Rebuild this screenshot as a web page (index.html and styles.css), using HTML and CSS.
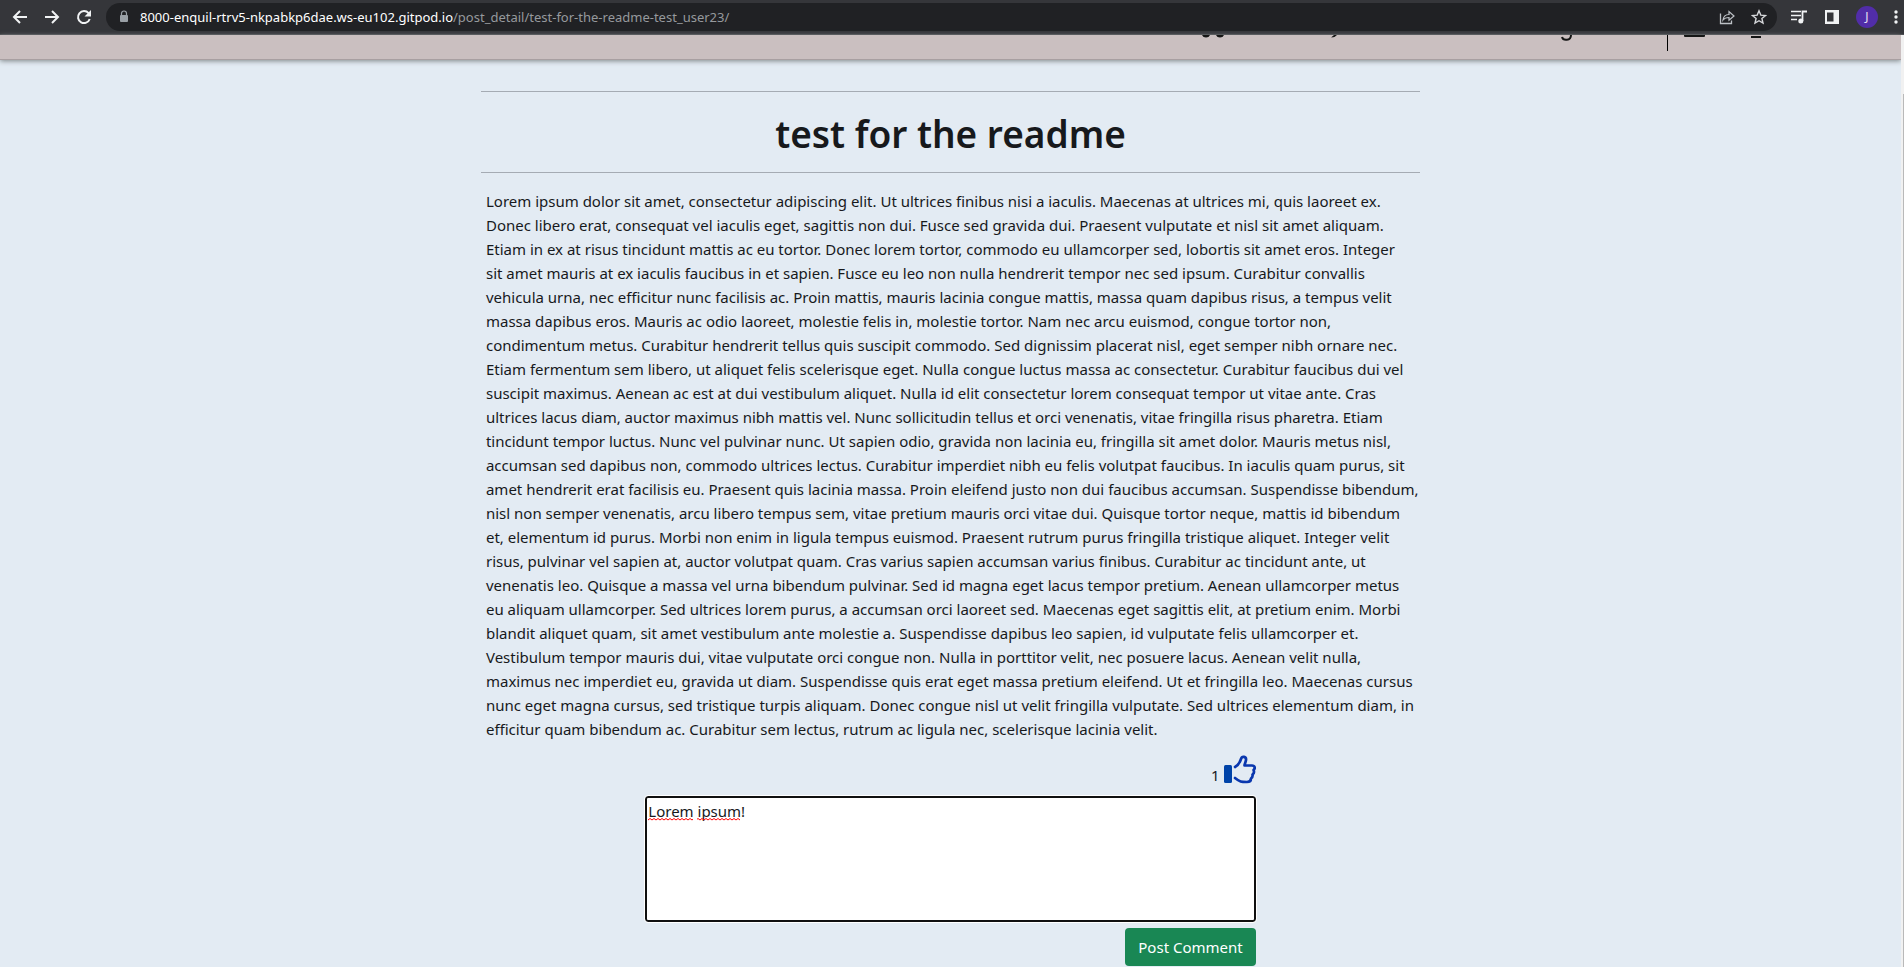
FILE: index.html
```html
<!DOCTYPE html>
<html lang="en">
<head>
<meta charset="utf-8">
<title>test for the readme</title>
<link rel="stylesheet" href="styles.css">
</head>
<body>
<div class="toolbar">
  <button class="tool" aria-label="Back"><svg width="16" height="16" viewBox="0 0 16 16"><path d="M15 8H2M8 2L2 8l6 6" fill="none" stroke="#f1f3f4" stroke-width="2"/></svg></button>
  <button class="tool" aria-label="Forward"><svg width="16" height="16" viewBox="0 0 16 16"><path d="M1 8h13M8 2l6 6-6 6" fill="none" stroke="#f1f3f4" stroke-width="2"/></svg></button>
  <button class="tool" aria-label="Reload"><svg width="16" height="16" viewBox="0 0 16 16"><path d="M13.7 10A6 6 0 1 1 12.6 4.2" fill="none" stroke="#f1f3f4" stroke-width="2"/><path d="M15 1v6.500H8.500z" fill="#f1f3f4"/></svg></button>
  <div class="address">
    <svg width="10" height="14" viewBox="0 0 10 14"><rect x="1" y="5" width="8" height="7" rx="1" fill="#9aa0a6"/><path d="M2.500 5.500V3.500a2.500 2.500 0 0 1 5 0v2" fill="none" stroke="#9aa0a6" stroke-width="1.200"/></svg>
    <span class="url"><b>8000-enquil-rtrv5-nkpabkp6dae.ws-eu102.gitpod.io</b>/post_detail/test-for-the-readme-test_user23/</span>
    <button class="tool" aria-label="Share"><svg width="16" height="16" viewBox="0 0 16 16"><path d="M1.500 4.500v10h11v-3" fill="none" stroke="#bdc1c6" stroke-width="1.300"/><path d="M4 11c.5-4 2.500-5.500 6-5.500V2.500l5 4.500-5 4.200V8.500C7.500 8.500 5.500 9 4 11z" fill="none" stroke="#bdc1c6" stroke-width="1.200"/></svg></button>
    <button class="tool" aria-label="Bookmark"><svg width="16" height="16" viewBox="0 0 16 16"><path d="M8 1.800l1.800 4.300 4.700.4-3.600 3 1.100 4.600L8 11.700l-4 2.400 1.100-4.600-3.600-3 4.700-.4z" fill="none" stroke="#d5d7da" stroke-width="1.400"/></svg></button>
  </div>
  <button class="tool" aria-label="Media"><svg width="18" height="16" viewBox="0 0 18 16"><path d="M1 2.500h10M1 6.500h10M1 10.500h6" stroke="#f1f3f4" stroke-width="1.700"/><circle cx="10.800" cy="12" r="2.500" fill="#f1f3f4"/><path d="M12.500 12V2.500H17" fill="none" stroke="#f1f3f4" stroke-width="1.800"/></svg></button>
  <button class="tool" aria-label="Side panel"><svg width="16" height="16" viewBox="0 0 16 16"><path fill="#f1f3f4" fill-rule="evenodd" d="M1 1h14v14H1zM3 3.500v9h6.500v-9z"/></svg></button>
  <button class="avatar" aria-label="Profile">J</button>
  <button class="tool menu" aria-label="Menu"><svg width="4" height="16" viewBox="0 0 4 16" fill="#f1f3f4"><circle cx="2" cy="3" r="1.700"/><circle cx="2" cy="8" r="1.700"/><circle cx="2" cy="13" r="1.700"/></svg></button>
</div>
<div class="page">
  <div class="content">
    <header class="site-header">
      <svg width="600" height="25" viewBox="0 0 600 25" aria-hidden="true">
        <path d="M22 0h8q-1 2.500-4 2.500T22 0zM36 0h8q-1 2.500-4 2.500T36 0zM151 2.500q4 0 6-2.500h-3zM504 0h21v1q0 1-1 1h-19q-1 0-1-1zM571 1h10v2h-10z" fill="#151515"/>
        <path d="M487.500 0v16" stroke="#000"/>
        <path d="M382 2c1 4 9 4 9-2" fill="none" stroke="#151515" stroke-width="2"/>
      </svg>
    </header>
    <main class="post">
      <h1 class="title">test for the readme</h1>
      <p class="body">Lorem ipsum dolor sit amet, consectetur adipiscing elit. Ut ultrices finibus nisi a iaculis. Maecenas at ultrices mi, quis laoreet ex.<br>
Donec libero erat, consequat vel iaculis eget, sagittis non dui. Fusce sed gravida dui. Praesent vulputate et nisl sit amet aliquam.<br>
Etiam in ex at risus tincidunt mattis ac eu tortor. Donec lorem tortor, commodo eu ullamcorper sed, lobortis sit amet eros. Integer<br>
sit amet mauris at ex iaculis faucibus in et sapien. Fusce eu leo non nulla hendrerit tempor nec sed ipsum. Curabitur convallis<br>
vehicula urna, nec efficitur nunc facilisis ac. Proin mattis, mauris lacinia congue mattis, massa quam dapibus risus, a tempus velit<br>
massa dapibus eros. Mauris ac odio laoreet, molestie felis in, molestie tortor. Nam nec arcu euismod, congue tortor non,<br>
condimentum metus. Curabitur hendrerit tellus quis suscipit commodo. Sed dignissim placerat nisl, eget semper nibh ornare nec.<br>
Etiam fermentum sem libero, ut aliquet felis scelerisque eget. Nulla congue luctus massa ac consectetur. Curabitur faucibus dui vel<br>
suscipit maximus. Aenean ac est at dui vestibulum aliquet. Nulla id elit consectetur lorem consequat tempor ut vitae ante. Cras<br>
ultrices lacus diam, auctor maximus nibh mattis vel. Nunc sollicitudin tellus et orci venenatis, vitae fringilla risus pharetra. Etiam<br>
tincidunt tempor luctus. Nunc vel pulvinar nunc. Ut sapien odio, gravida non lacinia eu, fringilla sit amet dolor. Mauris metus nisl,<br>
accumsan sed dapibus non, commodo ultrices lectus. Curabitur imperdiet nibh eu felis volutpat faucibus. In iaculis quam purus, sit<br>
amet hendrerit erat facilisis eu. Praesent quis lacinia massa. Proin eleifend justo non dui faucibus accumsan. Suspendisse bibendum,<br>
nisl non semper venenatis, arcu libero tempus sem, vitae pretium mauris orci vitae dui. Quisque tortor neque, mattis id bibendum<br>
et, elementum id purus. Morbi non enim in ligula tempus euismod. Praesent rutrum purus fringilla tristique aliquet. Integer velit<br>
risus, pulvinar vel sapien at, auctor volutpat quam. Cras varius sapien accumsan varius finibus. Curabitur ac tincidunt ante, ut<br>
venenatis leo. Quisque a massa vel urna bibendum pulvinar. Sed id magna eget lacus tempor pretium. Aenean ullamcorper metus<br>
eu aliquam ullamcorper. Sed ultrices lorem purus, a accumsan orci laoreet sed. Maecenas eget sagittis elit, at pretium enim. Morbi<br>
blandit aliquet quam, sit amet vestibulum ante molestie a. Suspendisse dapibus leo sapien, id vulputate felis ullamcorper et.<br>
Vestibulum tempor mauris dui, vitae vulputate orci congue non. Nulla in porttitor velit, nec posuere lacus. Aenean velit nulla,<br>
maximus nec imperdiet eu, gravida ut diam. Suspendisse quis erat eget massa pretium eleifend. Ut et fringilla leo. Maecenas cursus<br>
nunc eget magna cursus, sed tristique turpis aliquam. Donec congue nisl ut velit fringilla vulputate. Sed ultrices elementum diam, in<br>
efficitur quam bibendum ac. Curabitur sem lectus, rutrum ac ligula nec, scelerisque lacinia velit.</p>
      <form class="comment">
        <div class="likes">
          <span>1</span>
          <button type="button" class="like" aria-label="Like"><svg width="32" height="30" viewBox="0 0 32 30"><rect x="0" y="10" width="8" height="18" rx="1.500" fill="#0043a8"/><path d="M11 12c4-2 5-5 6-8 1-3.500 5.500-2.500 5 1-.3 2.500-1.500 4-1.500 5.500H28c3 0 3.500 3 1.500 4.500 1 2 .3 3.500-1 4.500.5 2-.3 3-1.500 4 0 2.500-1.500 3.500-4 3.500-6 0-7 0-12-4" fill="none" stroke="#0a37ae" stroke-width="2.700" stroke-linejoin="round" stroke-linecap="round"/></svg></button>
        </div>
        <div class="field">
          <textarea class="input" aria-label="Comment" spellcheck="false">Lorem ipsum!</textarea>
          <svg class="spelling" width="94" height="3" viewBox="0 0 94 3" aria-hidden="true"><defs><pattern id="wave" width="4" height="3" patternUnits="userSpaceOnUse"><path d="M0 2l2-1.500 2 1.500" fill="none" stroke="#f00"/></pattern></defs><path d="M0 0h45v3H0zM49 0h43v3H49z" fill="url(#wave)"/></svg>
        </div>
        <button type="submit" class="submit">Post Comment</button>
      </form>
    </main>
  </div>
  <div class="scrollbar"><div class="thumb"></div></div>
</div>
</body>
</html>
```
FILE: styles.css
```css
* { box-sizing: border-box; }
body {
  margin: 0;
  height: 100vh;
  display: flex;
  flex-direction: column;
  overflow: hidden;
  background: #e3ebf3;
  color: #17191c;
  font-family: "Noto Sans", "Open Sans", sans-serif;
  font-size: 15px;
  line-height: 24px;
}
button { font: inherit; border: 0; cursor: pointer; }
svg { display: block; }

.toolbar {
  flex: none;
  height: 35px;
  padding: 0 6px 0 12px;
  display: flex;
  align-items: center;
  gap: 16px;
  background: #35363a;
  border-bottom: 1px solid #4b4c50;
}
.tool { padding: 0; background: none; }
.address {
  flex: 1;
  height: 28px;
  margin-left: -2px;
  margin-right: -3px;
  padding: 0 10px 0 13px;
  display: flex;
  align-items: center;
  gap: 16px;
  border-radius: 14px;
  background: #202124;
}
.url {
  flex: 1;
  margin-left: -5px;
  color: #96999d;
  font-size: 13px;
  white-space: nowrap;
}
.url b { font-weight: 400; color: #fff; }
.avatar {
  width: 22px;
  height: 22px;
  padding: 0;
  border-radius: 50%;
  background: #512da8;
  color: #e8e0f5;
  font-size: 12px;
  line-height: 22px;
}

.page { flex: 1; min-height: 0; display: flex; }
.content { flex: 1; }
.site-header {
  height: 25px;
  padding-right: 121px;
  display: flex;
  justify-content: flex-end;
  background: #cabfc0;
  border-bottom: 1px solid #a89fa1;
  box-shadow: 0 1px 5px #7d8486;
}
.scrollbar { width: 3px; padding-top: 59px; background: #f1f1f1; display: flex; }
.thumb { flex: 1; margin-left: 2px; background: #b9b9b9; }

.post { width: 49.4%; margin: 31px auto 0; }
.title {
  margin: 0;
  padding: 18px 0 14px;
  border-top: 1px solid #a5abb3;
  border-bottom: 1px solid #a5abb3;
  font-size: 37px;
  font-weight: 600;
  line-height: 48px;
  text-align: center;
}
.body { margin: 0; padding: 16px 5px 0; white-space: nowrap; }
.comment {
  width: 65%;
  margin: 12px auto 0;
  display: flex;
  flex-direction: column;
  align-items: flex-end;
}
.likes { display: flex; align-items: flex-end; gap: 4px; height: 34px; }
.like { padding: 0; background: none; align-self: center; }
.field { position: relative; width: 100%; margin-top: 9px; }
.input {
  display: block;
  width: 100%;
  height: 126px;
  padding: 1px;
  border: 2px solid #101010;
  border-radius: 3px;
  outline: 1px solid #fff;
  background: #fff;
  color: #17191c;
  font: inherit;
  resize: none;
}
.spelling { position: absolute; left: 3px; top: 22px; }
.submit {
  height: 38px;
  margin-top: 6px;
  padding: 0 13px;
  border-radius: 4px;
  background: #198754;
  color: #fff;
}
```
